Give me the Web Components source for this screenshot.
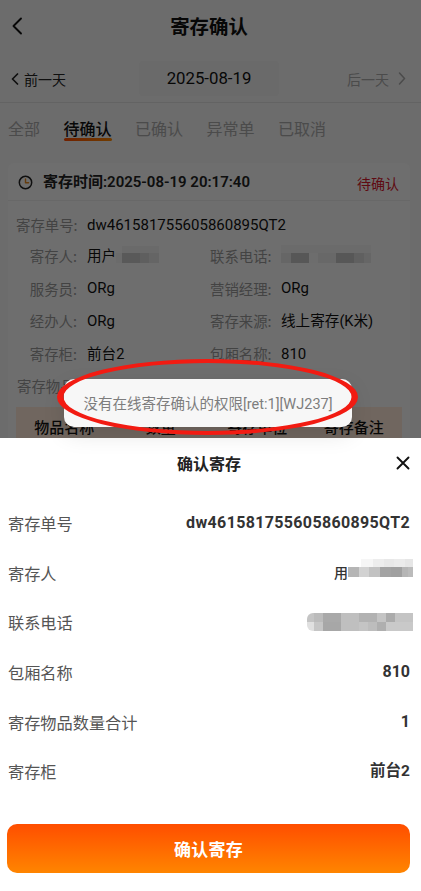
<!DOCTYPE html>
<html lang="zh-CN"><head><meta charset="utf-8"><title>寄存确认</title>
<style>
html,body{margin:0;padding:0;background:#fff}
body{width:421px;height:891px;overflow:hidden;font-family:Roboto,"Noto Sans CJK SC",sans-serif}
</style></head><body>
<confirm-page>
  <nav-header slot="top" title="寄存确认"></nav-header>
  <date-bar slot="top"></date-bar>
  <status-tabs slot="top"></status-tabs>
  <order-card slot="top"></order-card>
  <confirm-sheet slot="sheet"></confirm-sheet>
</confirm-page>
<script>
const mosaic=(rows,extra='')=>`<span style="display:inline-flex;flex-direction:column;flex:none;${extra}">${rows.map(r=>`<span style="display:flex;height:${r.h}px;margin-left:${r.x||0}px">${r.c.map(([w,c])=>`<i style="display:block;width:${w}px;height:100%;background:${c}"></i>`).join('')}</span>`).join('')}</span>`;
function def(name,html){customElements.define(name,class extends HTMLElement{constructor(){super();this.attachShadow({mode:'open'}).innerHTML=typeof html==='function'?html(this):html;}});}

def('confirm-page',`<style>
:host{display:flex;flex-direction:column;width:421px;height:891px;position:relative;overflow:hidden}
.top{height:438px;flex:none;background:#f5f5f5;overflow:hidden;position:relative}
.dim{position:absolute;left:0;top:0;right:0;height:438px;background:rgba(0,0,0,.56);pointer-events:none}
.sheet{flex:1;background:#fff;position:relative}
</style>
<div class="top"><slot name="top"></slot><div class="dim"></div></div>
<div class="sheet"><slot name="sheet"></slot></div>
<toast-note></toast-note>
<red-ring></red-ring>`);

def('nav-header',el=>`<style>
:host{display:flex;align-items:center;justify-content:center;height:52px;padding-right:3px;box-sizing:border-box;background:#f6f6f6;position:relative;color:#111}
.t{font:700 19.4px/1 "Noto Sans CJK SC",sans-serif}
svg{position:absolute;left:11px;top:17px}
</style>
<svg width="12" height="18" viewBox="0 0 12 18" fill="none" stroke="#111" stroke-width="1.9" stroke-linecap="round" stroke-linejoin="round"><path d="M10 1.5 2.5 9l7.5 7.5"/></svg>
<span class="t">${el.getAttribute('title')||'寄存确认'}</span>`);

def('date-bar',`<style>
:host{display:grid;grid-template-columns:1fr 140px 1fr;align-items:center;height:51px;box-sizing:border-box;padding:9px 11px 7px 8px;background:#f6f6f6;border-bottom:1px solid #e2e2e2;font:14px/1 "Noto Sans CJK SC",sans-serif;color:#222}
.side{display:flex;align-items:center;gap:5px;padding-left:3px}
.next{justify-content:flex-end;color:#aaa;gap:9px;padding:0 4px 0 0}
.d{height:35px;display:flex;align-items:center;justify-content:center;background:#f1f1f1;border-radius:4px;font:16.8px/1 Roboto,sans-serif;color:#111}
</style>
<span class="side"><svg width="8" height="12" viewBox="0 0 8 12" fill="none" stroke="#222" stroke-width="1.7" stroke-linecap="round" stroke-linejoin="round"><path d="M6.5 1 1.5 6l5 5"/></svg>前一天</span>
<span class="d">2025-08-19</span>
<span class="side next">后一天<svg width="8" height="13" viewBox="0 0 8 13" fill="none" stroke="#aaa" stroke-width="1.5" stroke-linecap="round" stroke-linejoin="round"><path d="M1.5 1 6.5 6.5l-5 5.5"/></svg></span>`);

def('status-tabs',`<style>
:host{display:flex;gap:23.5px;height:60px;box-sizing:border-box;padding:0 8px;background:#f5f5f5;font:16px/1 "Noto Sans CJK SC",sans-serif;color:#aaa}
span{display:block;padding-top:17px;height:20px;position:relative}
.on{color:#111;font-weight:500}
.on::after{content:"";position:absolute;left:0;right:0;top:35px;height:3px;border-radius:2px;background:linear-gradient(90deg,#ff4b00,#ff8a00)}
</style>
<span>全部</span><span class="on">待确认</span><span>已确认</span><span>异常单</span><span>已取消</span>`);

const L=(l,v,w=61)=>`<div class="kv"><span class="k" style="width:${w}px">${l}:</span><span class="v ${/[\u4e00-\u9fff]/.test(v)?'cjk':''}">${v}</span></div>`;
const cardUser=mosaic([{h:7,x:6,c:[[37,'#f2f2f2']]},{h:10,c:[[6,'#f4f4f4'],[18,'#cacaca'],[9,'#d8d8d8'],[10,'#e6e6e6']]}],'margin-bottom:3px');
const cardPhone=mosaic([{h:8,c:[[90,'#f3f3f3']]},{h:10,c:[[10,'#e8e8e8'],[18,'#c6c6c6'],[9,'#f8f8f8'],[18,'#ececec'],[18,'#c6c6c6'],[10,'#dadada'],[7,'#e8e8e8']]}],'margin-bottom:4px');
def('order-card',`<style>
:host{display:block;margin:0 11px 0 8px;background:#fbfbfb;border-radius:6px;font:15px/1 "Noto Sans CJK SC",sans-serif}
.head{display:flex;align-items:center;height:38px;box-sizing:border-box;padding:2px 11px 0 10px;border-bottom:1px solid #ededed;gap:10px;font:600 15px/1 Roboto,"Noto Sans CJK SC",sans-serif;color:#222}
.head b{margin-left:auto;font:400 14px/1 "Noto Sans CJK SC",sans-serif;color:#d8172c}
.body{padding:7px 0 0 8px;display:flex;flex-direction:column}
.row{display:grid;grid-template-columns:194px 1fr;height:32.6px;align-items:center}
.row.first{display:block;padding-top:10px;height:22px}
.kv{display:flex;align-items:center;gap:10px;white-space:nowrap}
.k{color:#9a9a9a;text-align:right;font-size:14.4px}
.v{color:#111;font:15px/1 Roboto,"Noto Sans CJK SC",sans-serif;display:inline-flex;align-items:center}
.v.cjk{font-size:14.6px}
.table{display:grid;grid-template-columns:repeat(4,96.5px);margin:5px 8px 0 8px;height:50px;padding-top:12px;box-sizing:border-box;background:#ffe9d8;font:500 15px/1 "Noto Sans CJK SC",sans-serif;color:#111;text-align:center}
.goods{color:#9a9a9a;font-size:14.4px;padding-left:1px;height:32px;display:flex;align-items:center}
</style>
<div class="head"><svg width="15" height="15" viewBox="0 0 16 16" fill="none"><circle cx="8" cy="8" r="6.6" stroke="#222" stroke-width="1.6"/><path d="M8 4.2V8.3H11.3" stroke="#e58a1f" stroke-width="1.5" stroke-linecap="round" stroke-linejoin="round"/></svg><span>寄存时间:2025-08-19 20:17:40</span><b>待确认</b></div>
<div class="body">
<div class="row first">${L('寄存单号','dw461581755605860895QT2')}</div>
<div class="row">${L('寄存人','用户'+cardUser)}${L('联系电话',cardPhone)}</div>
<div class="row">${L('服务员','ORg')}${L('营销经理','ORg')}</div>
<div class="row">${L('经办人','ORg')}${L('寄存来源','线上寄存(K米)')}</div>
<div class="row">${L('寄存柜','前台2')}${L('包厢名称','810')}</div>
<div class="goods">寄存物品:</div>
</div>
<div class="table"><span>物品名称</span><span>数量</span><span>寄存单位</span><span>寄存备注</span></div>`);

def('toast-note',`<style>
:host{position:absolute;left:64px;top:379px;width:288px;height:48px;box-sizing:border-box;background:#f7f7f7;border-radius:10px;box-shadow:0 8px 22px rgba(0,0,0,.1);display:flex;align-items:center;justify-content:center;font:14.5px/1 Roboto,"Noto Sans CJK SC",sans-serif;color:#7d7d7d;white-space:nowrap;padding-top:4px}
</style>没有在线寄存确认的权限[ret:1][WJ237]`);

def('red-ring',`<style>:host{position:absolute;left:0;top:350px;width:421px;height:100px;pointer-events:none}svg{display:block}</style>
<svg width="421" height="100" viewBox="0 0 421 100"><path fill="#f21b12" fill-rule="evenodd" d="M57 47a150.5 38 0 1 0 301 0a150.5 38 0 1 0 -301 0ZM63.5 47a144 34 0 1 0 288 0a144 34 0 1 0 -288 0Z"/></svg>`);

const S=(l,v,c='')=>`<div class="r"><span class="l">${l}</span><span class="val ${c}">${v}</span></div>`;
const sheetUser=mosaic([{h:8,x:13,c:[[12,'#f6f6f6'],[11,'#ededed'],[10,'#e8e8e8'],[11,'#ebebeb'],[8,'#e6e6e6']]},{h:10,c:[[11,'#b5b5b5'],[10,'#d2d2d2'],[11,'#c2c2c2'],[11,'#a3a3a3'],[11,'#a0a0a0'],[6,'#b5b5b5'],[5,'#bbbbbb']]}],'margin:0 -3px 10px 0');
const sheetPhone=mosaic([{h:9,c:[[7,'#c4c4c4'],[9,'#bbbbbb'],[18,'#a9a9a9'],[18,'#bfbfbf'],[18,'#b2b2b2'],[9,'#c4c4c4'],[9,'#ababab'],[18,'#c4c4c4']]},{h:9,c:[[7,'#e0e0e0'],[9,'#c6c6c6'],[18,'#a7a7a7'],[18,'#bfbfbf'],[9,'#c4c4c4'],[9,'#bdbdbd'],[9,'#afafaf'],[27,'#c9c9c9']]}],'margin-right:-3px;border-radius:6px 0 0 6px;overflow:hidden');
def('confirm-sheet',`<style>
:host{display:flex;flex-direction:column;height:453px;box-sizing:border-box;background:#fff;font:15px/1 "Noto Sans CJK SC",sans-serif}
.title{height:50px;display:flex;align-items:center;justify-content:center;padding-right:3px;position:relative;font:700 16px/1 "Noto Sans CJK SC",sans-serif;color:#222}
.title svg{position:absolute;right:11px;top:18px}
.list{padding-top:10.5px;display:flex;flex-direction:column}
.r{height:49.6px;display:flex;justify-content:space-between;align-items:center;padding:0 11px 0 8px}
.l{color:#555;font-size:16.2px}
.val{font:700 16px/1 Roboto,"Noto Sans CJK SC",sans-serif;color:#333;display:inline-flex;align-items:center}
.val.no{letter-spacing:.35px}
.val.cj{font-size:15.5px}
.btn{margin:27.5px 11px 0 7px;height:49px;border-radius:10px;background:linear-gradient(180deg,#ff4e00,#ff8500);color:#fff;display:flex;align-items:center;justify-content:center;font:700 17px/1 "Noto Sans CJK SC",sans-serif;letter-spacing:.3px}
</style>
<div class="title">确认寄存<svg width="14" height="14" viewBox="0 0 14 14" fill="none" stroke="#111" stroke-width="1.9" stroke-linecap="round"><path d="M1.5 1.5 12.5 12.5M12.5 1.5 1.5 12.5"/></svg></div>
<div class="list">
${S('寄存单号','dw461581755605860895QT2','no')}
${S('寄存人','<span style="font-size:14px;font-weight:500">用</span>'+sheetUser)}
${S('联系电话',sheetPhone)}
${S('包厢名称','810')}
${S('寄存物品数量合计','1')}
${S('寄存柜','前台2','cj')}
</div>
<div class="btn">确认寄存</div>`);
</script></body></html>
